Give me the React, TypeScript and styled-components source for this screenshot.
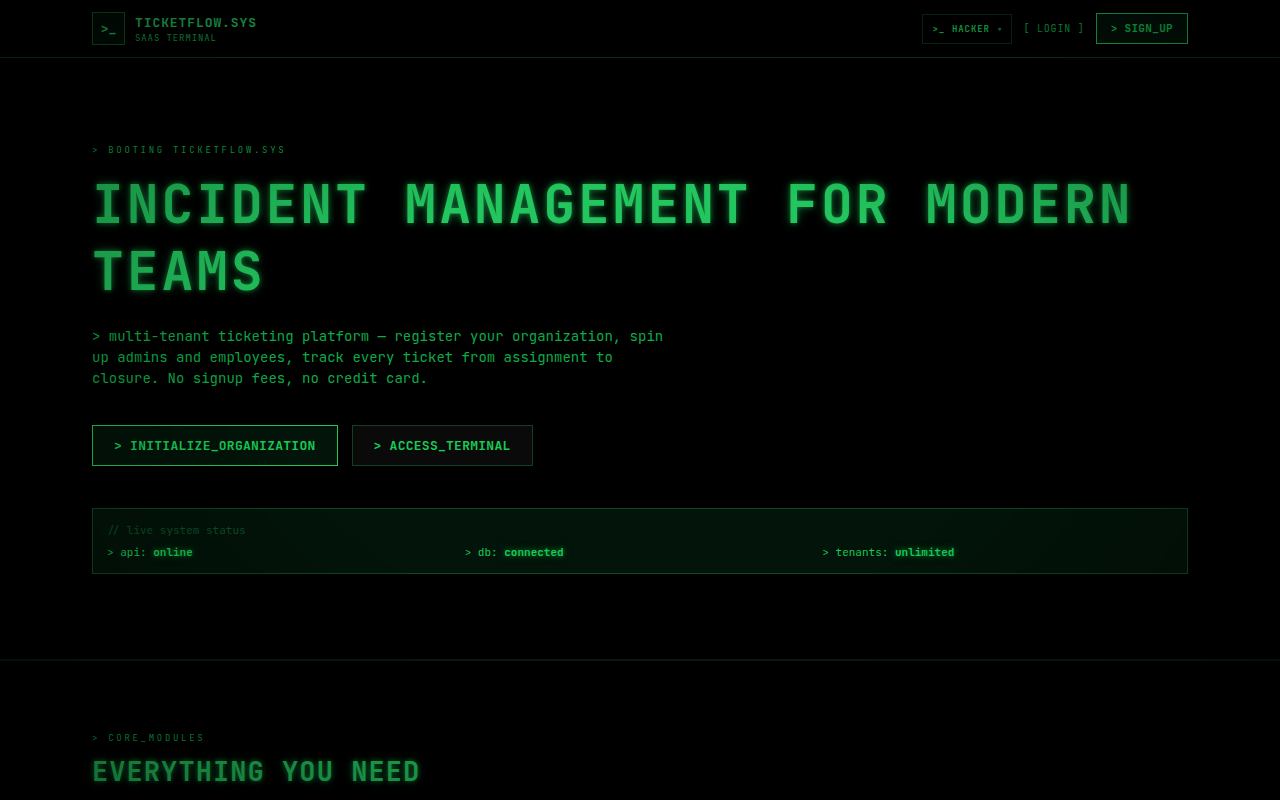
import React from "react";
import styled, { createGlobalStyle, css } from "styled-components";

const mono = `"JetBrains Mono", "DejaVu Sans Mono", "Liberation Mono", monospace`;
const green = "#22c55e";
const greenText = "#18cb56";
const greenDim = "#0eab48";
const tint = (a: number) => `rgba(34, 197, 94, ${a})`;

const GlobalStyle = createGlobalStyle`
  *, *::before, *::after { box-sizing: border-box; }
  body {
    margin: 0;
    background: #000;
    color: ${greenText};
    font-family: ${mono};
    font-size: 14px;
  }
  h1, h2, p { margin: 0; }
  button, select { font-family: inherit; cursor: pointer; }
`;

const glow = css`
  text-shadow: 0 0 5px ${tint(0.5)}, 0 0 11px ${tint(0.4)};
`;

const Page = styled.div`
  min-height: 100vh;
`;

const Vignette = styled.div`
  position: fixed;
  inset: 0;
  z-index: 10;
  pointer-events: none;
  background: radial-gradient(ellipse at center, transparent 40%, rgba(0, 0, 0, 0.5) 100%);
`;

const Container = styled.div`
  width: 100%;
  max-width: 1138px;
  margin: 0 auto;
  padding: 0 21px;
`;

const Header = styled.header`
  border-bottom: 1px solid ${tint(0.3)};
`;

const HeaderRow = styled(Container)`
  display: flex;
  align-items: center;
  justify-content: space-between;
  padding-top: 12px;
  padding-bottom: 12px;
`;

const Brand = styled.a`
  display: flex;
  align-items: center;
  gap: 10px;
  color: ${green};
  text-decoration: none;
`;

const BrandMark = styled.span`
  display: grid;
  place-items: center;
  width: 33px;
  height: 33px;
  border: 1px solid ${tint(0.4)};
  background: ${tint(0.08)};
  font-size: 13px;
  font-weight: 700;
`;

const BrandText = styled.span`
  display: flex;
  flex-direction: column;
`;

const BrandName = styled.span`
  font-size: 13px;
  line-height: 19px;
  font-weight: 700;
  letter-spacing: 0.07em;
`;

const BrandTag = styled.span`
  font-size: 9px;
  line-height: 13px;
  letter-spacing: 0.1em;
  color: ${greenDim};
`;

const Nav = styled.nav`
  display: flex;
  align-items: center;
  gap: 11px;
`;

const ThemePicker = styled.label`
  display: flex;
  align-items: center;
  gap: 7px;
  height: 30px;
  padding: 0 9px;
  border: 1px solid ${tint(0.25)};
  font-size: 9px;
  font-weight: 700;
  letter-spacing: 0.1em;
`;

const ThemeSelect = styled.select`
  appearance: none;
  width: 38px;
  padding: 0;
  border: 0;
  background: transparent;
  color: inherit;
  font-size: inherit;
  font-weight: inherit;
  letter-spacing: inherit;
`;

const Caret = styled.span`
  font-family: "DejaVu Sans Mono", monospace;
  font-size: 9px;
  font-weight: 400;
  letter-spacing: 0;
  opacity: 0.7;
`;

const LoginLink = styled.a`
  font-size: 10px;
  line-height: 14px;
  letter-spacing: 0.08em;
  color: ${greenDim};
  text-decoration: none;
`;

const Button = styled.button<{ $size?: "small" | "large"; $quiet?: boolean }>`
  border: 1px solid ${(p) => (p.$quiet ? tint(0.3) : green)};
  background: ${(p) => (p.$quiet ? "#0a0a0a" : tint(0.1))};
  color: ${greenText};
  font-weight: 700;
  ${(p) =>
    p.$size === "small"
      ? css`
          padding: 7px 14px;
          font-size: 11px;
          line-height: 15px;
          letter-spacing: 0.03em;
        `
      : css`
          padding: 10px 21px;
          font-size: 13px;
          line-height: 19px;
          letter-spacing: 0.02em;
        `}
`;

const Hero = styled.section`
  padding: 85px 0;
  border-bottom: 2px solid ${tint(0.15)};
`;

const Modules = styled.section`
  padding: 70px 0 11px;
`;

const Eyebrow = styled.p`
  font-size: 9px;
  line-height: 14px;
  letter-spacing: 0.3em;
  color: ${greenDim};
`;

const Title = styled.h1`
  margin-top: 14px;
  color: ${green};
  font-size: 53px;
  line-height: 67px;
  font-weight: 700;
  letter-spacing: 0.055em;
  ${glow}
`;

const Subtitle = styled.h2`
  margin-top: 10px;
  color: ${green};
  font-size: 27px;
  line-height: 32px;
  font-weight: 700;
  letter-spacing: 0.04em;
  ${glow}
`;

const Lead = styled.p`
  max-width: 585px;
  margin-top: 21px;
  font-size: 14px;
  line-height: 21px;
  color: ${greenDim};
`;

const Actions = styled.div`
  display: flex;
  flex-wrap: wrap;
  gap: 14px;
  margin-top: 36px;
`;

const StatusPanel = styled.div`
  margin-top: 42px;
  padding: 14px;
  border: 1px solid ${tint(0.3)};
  background: ${tint(0.1)};
  font-size: 11px;
  line-height: 14px;
`;

const StatusNote = styled.p`
  margin-bottom: 7px;
  line-height: 15px;
  color: ${tint(0.35)};
`;

const StatusGrid = styled.div`
  display: grid;
  grid-template-columns: repeat(3, 1fr);
  gap: 7px;
`;

const StatusValue = styled.strong`
  font-weight: 700;
  ${glow}
`;

const statuses = [
  { name: "api", value: "online" },
  { name: "db", value: "connected" },
  { name: "tenants", value: "unlimited" },
];

export default function App() {
  return (
    <Page>
      <GlobalStyle />
      <Vignette />
      <Header>
        <HeaderRow>
          <Brand href="#">
            <BrandMark>&gt;_</BrandMark>
            <BrandText>
              <BrandName>TICKETFLOW.SYS</BrandName>
              <BrandTag>SAAS TERMINAL</BrandTag>
            </BrandText>
          </Brand>
          <Nav>
            <ThemePicker>
              <span>&gt;_</span>
              <ThemeSelect aria-label="Theme" defaultValue="hacker">
                <option value="hacker">HACKER</option>
              </ThemeSelect>
              <Caret>▾</Caret>
            </ThemePicker>
            <LoginLink href="#login">[ LOGIN ]</LoginLink>
            <Button $size="small">&gt; SIGN_UP</Button>
          </Nav>
        </HeaderRow>
      </Header>
      <main>
        <Hero>
          <Container>
            <Eyebrow>&gt; BOOTING TICKETFLOW.SYS</Eyebrow>
            <Title>INCIDENT MANAGEMENT FOR MODERN TEAMS</Title>
            <Lead>
              &gt; multi-tenant ticketing platform — register your organization, spin up admins
              and employees, track every ticket from assignment to closure. No signup fees, no
              credit card.
            </Lead>
            <Actions>
              <Button>&gt; INITIALIZE_ORGANIZATION</Button>
              <Button $quiet>&gt; ACCESS_TERMINAL</Button>
            </Actions>
            <StatusPanel>
              <StatusNote>// live system status</StatusNote>
              <StatusGrid>
                {statuses.map((s) => (
                  <div key={s.name}>
                    &gt; {s.name}: <StatusValue>{s.value}</StatusValue>
                  </div>
                ))}
              </StatusGrid>
            </StatusPanel>
          </Container>
        </Hero>
        <Modules>
          <Container>
            <Eyebrow>&gt; CORE_MODULES</Eyebrow>
            <Subtitle>EVERYTHING YOU NEED</Subtitle>
          </Container>
        </Modules>
      </main>
    </Page>
  );
}
